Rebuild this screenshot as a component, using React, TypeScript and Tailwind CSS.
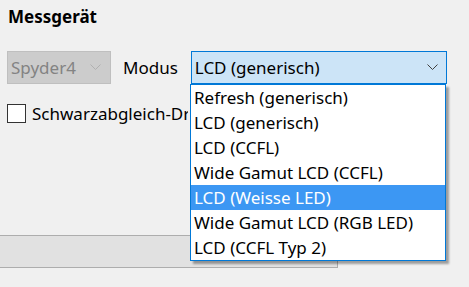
const modes = [
  'Refresh (generisch)',
  'LCD (generisch)',
  'LCD (CCFL)',
  'Wide Gamut LCD (CCFL)',
  'LCD (Weisse LED)',
  'Wide Gamut LCD (RGB LED)',
  'LCD (CCFL Typ 2)',
];

function Chevron({ color }: { color: string }) {
  return (
    <svg width="11" height="7" viewBox="0 0 11 7" fill="none">
      <path d="M0.5 0.5 L5.5 5.5 L10.5 0.5" stroke={color} strokeWidth="1" />
    </svg>
  );
}

export default function App() {
  const selected = 4;

  return (
    <div className="relative w-[469px] h-[287px] overflow-hidden bg-[#f0f0f0] text-[17px] text-black font-['Noto_Sans',sans-serif]">
      {/* Section title */}
      <div className="pl-[8px] pt-[5px] h-[51px] font-bold text-[17px] leading-[24px]">Messgerät</div>

      {/* Device + mode row */}
      <div className="flex items-start h-[53px]">
        <div className="ml-[7px] w-[104px] h-[33px] flex items-center justify-between border border-[#bfbfbf] bg-[#cccccc] pl-[3px] pr-[9px] text-[#838383]">
          <span>Spyder4</span>
          <Chevron color="#b0b0b0" />
        </div>
        <div className="ml-[12px] h-[33px] flex items-center">Modus</div>
        <div className="ml-[13px] w-[256px] h-[33px] flex items-center justify-between border border-[#0078d7] bg-[#cce4f7] pl-[3px] pr-[8px]">
          <span>LCD (generisch)</span>
          <Chevron color="#404040" />
        </div>
      </div>

      {/* Checkbox row — label runs under the open list */}
      <div className="flex items-center ml-[7px] h-[19px] gap-[6px]">
        <div className="w-[19px] h-[19px] border border-[#333] bg-white shrink-0" />
        <span className="w-[156px] overflow-hidden whitespace-nowrap">Schwarzabgleich-Drift-Kompensation</span>
      </div>

      {/* Lower band */}
      <div className="mt-[112px] w-[338px] h-[33px] bg-[#e1e1e1] border-y border-r border-[#adadad]" />

      {/* Dropdown list */}
      <div className="absolute left-[190px] top-[84px] w-[256px] border border-[#0078d7] bg-white shadow-[3px_3px_2px_rgba(0,0,0,0.35)]">
        {modes.map((m, i) => (
          <div
            key={m}
            className={
              i === selected
                ? 'h-[25px] flex items-center pl-[3px] bg-[#3c97f3] text-white'
                : 'h-[25px] flex items-center pl-[3px]'
            }
          >
            {m}
          </div>
        ))}
      </div>
    </div>
  );
}
